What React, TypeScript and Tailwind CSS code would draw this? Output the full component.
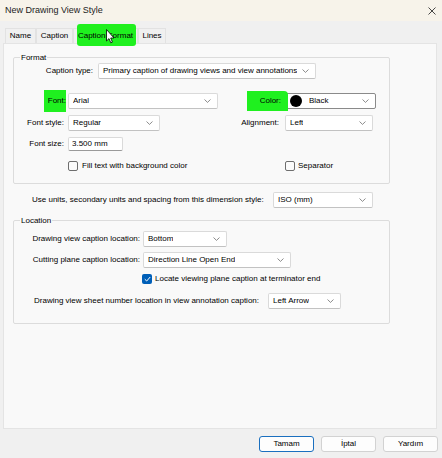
import React from "react";

const Chevron = () => (
  <svg width="7" height="4" viewBox="0 0 7 4" className="shrink-0">
    <path d="M0.5 0.5 L3.5 3.4 L6.5 0.5" fill="none" stroke="#6f6f6f" strokeWidth="0.8" />
  </svg>
);

const Select = ({ className, children, dark }: { className: string; children: React.ReactNode; dark?: boolean }) => (
  <div
    className={
      "flex items-center justify-between h-[16px] bg-white rounded-[2px] pl-[4px] pr-[6px] border " +
      (dark ? "border-[#8a8a8a] " : "border-[#dadada] border-b-[#c2c2c2] ") +
      className
    }
  >
    <div className="flex items-center whitespace-nowrap overflow-hidden">{children}</div>
    <Chevron />
  </div>
);

const Check = ({ checked }: { checked?: boolean }) =>
  checked ? (
    <div className="w-[10px] h-[10px] rounded-[2px] bg-[#005fb8] flex items-center justify-center shrink-0">
      <svg width="7" height="6" viewBox="0 0 7 6">
        <path d="M0.8 3.2 L2.7 5 L6.2 1" fill="none" stroke="white" strokeWidth="1" />
      </svg>
    </div>
  ) : (
    <div className="w-[10px] h-[10px] rounded-[2px] border border-[#6e6e6e] bg-[#fbfbfb] shrink-0" />
  );

const Tab = ({ className, children }: { className: string; children: React.ReactNode }) => (
  <div className={"h-[15px] flex items-center justify-center border border-b-0 border-[#e2e2e2] relative " + className}>
    {children}
  </div>
);

export default function App() {
  return (
    <div className="w-[442px] h-[458px] bg-[#f0f0f0] relative overflow-hidden text-black text-[8px] leading-none font-['Liberation_Sans',Arial,sans-serif]">
      {/* Title bar */}
      <div className="h-[21px] bg-[#f7f3ea] flex items-center justify-between pl-[5px] pr-[6px]">
        <span className="text-[9px] text-[#1c1c1c]">New Drawing View Style</span>
        <svg width="8" height="8" viewBox="0 0 8 8">
          <path d="M0.5 0.5 L7.5 7.5 M7.5 0.5 L0.5 7.5" stroke="#333" strokeWidth="0.9" />
        </svg>
      </div>

      {/* Tabs */}
      <div className="h-[22px] flex items-end pl-[5px]">
        <Tab className="w-[31px]">Name</Tab>
        <Tab className="w-[37px]">Caption</Tab>
        <Tab className="w-[65px]">
          <div className="absolute left-[3px] right-[1px] -top-[5px] -bottom-[3px] bg-[#1ff01f] rounded-[3px]" />
          <span className="relative">Caption Format</span>
        </Tab>
        <Tab className="w-[28px]">Lines</Tab>
      </div>

      {/* Cursor */}
      <svg className="absolute left-[106px] top-[29px]" width="9" height="15" viewBox="0 0 9 15">
        <path d="M0.5 0.5 L0.5 12 L3 9.6 L4.8 13.8 L6.4 13.1 L4.7 9 L8 9 Z" fill="white" stroke="black" strokeWidth="0.8" strokeLinejoin="round" />
      </svg>

      {/* Panel */}
      <div className="ml-[3px] w-[434px] h-[386px] bg-[#f9f9f9] border border-[#e4e4e4] flex flex-col">
        {/* Format group */}
        <div className="ml-[9px] mt-[13px] w-[377px] h-[127px] border border-[#dcdcdc] rounded-[2px] relative flex flex-col pt-[5px]">
          <span className="absolute left-[6px] -top-[5px] bg-[#f9f9f9] px-[1px] leading-[10px]">Format</span>

          <div className="flex items-center h-[16px]">
            <span className="w-[79px] text-right">Caption type:</span>
            <Select className="ml-[5px] w-[218px]">Primary caption of drawing views and view annotations</Select>
          </div>

          <div className="flex items-center h-[16px] mt-[14px]">
            <div className="w-[52px] flex justify-end">
              <span className="w-[22px] h-[22px] bg-[#1ff01f] flex items-center justify-end">Font:</span>
            </div>
            <Select className="ml-[2px] w-[150px]">Arial</Select>
            <span className="ml-[29px] w-[41px] -mr-[3px] h-[20px] bg-[#1ff01f] relative z-10 flex items-center justify-end pr-[7px] rounded-tr-[4px]">
              Color:
            </span>
            <Select dark className="w-[91px] pl-[2px]">
              <span className="w-[12px] h-[12px] rounded-full bg-black inline-block" />
              <span className="ml-[7px]">Black</span>
            </Select>
          </div>

          <div className="flex items-center h-[16px] mt-[6px]">
            <span className="w-[52px] text-right pr-[2px]">Font style:</span>
            <Select className="ml-[2px] w-[92px]">Regular</Select>
            <span className="w-[122px] text-right pr-[3px]">Alignment:</span>
            <Select className="ml-[3px] w-[88px]">Left</Select>
          </div>

          <div className="flex items-center h-[14px] mt-[6px]">
            <span className="w-[52px] text-right pr-[2px]">Font size:</span>
            <div className="ml-[2px] w-[55px] h-[14px] bg-white border border-[#dadada] border-b-[#9a9a9a] rounded-[2px] flex items-center pl-[3px]">
              3.500 mm
            </div>
          </div>

          <div className="flex items-center h-[10px] mt-[10px] pl-[54px]">
            <div className="w-[217px] flex items-center">
              <Check />
              <span className="ml-[4px]">Fill text with background color</span>
            </div>
            <Check />
            <span className="ml-[3px]">Separator</span>
          </div>
        </div>

        {/* Units row */}
        <div className="flex items-center h-[16px] mt-[8px] ml-[28px]">
          <span className="w-[241px]">Use units, secondary units and spacing from this dimension style:</span>
          <Select className="w-[100px]">ISO (mm)</Select>
        </div>

        {/* Location group */}
        <div className="ml-[9px] mt-[12px] w-[377px] h-[104px] border border-[#dcdcdc] rounded-[2px] relative flex flex-col pt-[10px]">
          <span className="absolute left-[6px] -top-[5px] bg-[#f9f9f9] px-[1px] leading-[10px]">Location</span>

          <div className="flex items-center h-[16px]">
            <span className="w-[126px] text-right">Drawing view caption location:</span>
            <Select className="ml-[3px] w-[84px]">Bottom</Select>
          </div>

          <div className="flex items-center h-[16px] mt-[5px]">
            <span className="w-[126px] text-right">Cutting plane caption location:</span>
            <Select className="ml-[3px] w-[148px]">Direction Line Open End</Select>
          </div>

          <div className="flex items-center h-[10px] mt-[6px] pl-[128px]">
            <Check checked />
            <span className="ml-[3px]">Locate viewing plane caption at terminator end</span>
          </div>

          <div className="flex items-center h-[16px] mt-[9px] pl-[20px]">
            <span className="w-[234px]">Drawing view sheet number location in view annotation caption:</span>
            <Select className="w-[73px]">Left Arrow</Select>
          </div>
        </div>
      </div>

      {/* Buttons */}
      <div className="flex justify-end gap-[7px] pr-[4px] mt-[7px]">
        <button className="w-[55px] h-[16px] rounded-[3px] bg-[#fdfdfd] border border-[#1a6fbf] text-[8px]">Tamam</button>
        <button className="w-[55px] h-[16px] rounded-[3px] bg-[#fdfdfd] border border-[#d2d2d2] text-[8px]">İptal</button>
        <button className="w-[55px] h-[16px] rounded-[3px] bg-[#fdfdfd] border border-[#d2d2d2] text-[8px]">Yardım</button>
      </div>
    </div>
  );
}
